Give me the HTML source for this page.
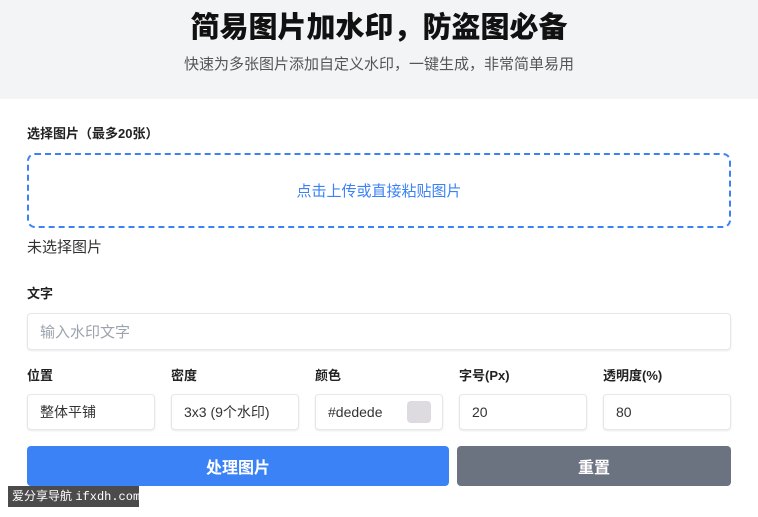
<!DOCTYPE html>
<html><head><meta charset="utf-8"><style>
*{margin:0;padding:0;box-sizing:border-box}
body{width:758px;height:517px;background:#fff;font-family:"Liberation Sans","Noto Sans CJK SC",sans-serif;position:relative;overflow:hidden;color:#222}
.a{position:absolute}
.hd{left:0;top:0;width:758px;height:99px;background:#f3f4f6}
.lbl{font-size:13px;font-weight:bold;color:#222}
.inp{border:1px solid #e5e7eb;border-radius:4px;box-shadow:0 1px 2px rgba(0,0,0,.08);background:#fff;font-size:14px;color:#333;padding-left:12px;display:flex;align-items:center}
.btn{border-radius:4px;color:#fff;font-size:16px;font-weight:bold;display:flex;align-items:center;justify-content:center}
</style></head><body>
<div class="a hd"></div>
<div class="a" style="left:0;width:758px;top:8px;text-align:center;font-size:29px;font-weight:900;color:#111;line-height:40px">简易图片加水印，防盗图必备</div>
<div class="a" style="left:0;width:758px;top:55px;text-align:center;font-size:15px;color:#555;line-height:20px">快速为多张图片添加自定义水印，一键生成，非常简单易用</div>
<div class="a lbl" style="left:27px;top:125px;line-height:18px">选择图片（最多20张）</div>
<div class="a" style="left:27px;top:153px;width:704px;height:75px;border:2px dashed #3b82f6;border-radius:8px;display:flex;align-items:center;justify-content:center;color:#3b82f6;font-size:15px">点击上传或直接粘贴图片</div>
<div class="a" style="left:27px;top:238px;font-size:15px;color:#333;line-height:20px">未选择图片</div>
<div class="a lbl" style="left:27px;top:285px;line-height:18px">文字</div>
<div class="a inp" style="left:27px;top:313px;width:704px;height:37px;color:#9ca3af;font-size:15px">输入水印文字</div>
<div class="a lbl" style="left:27px;top:367px;line-height:18px">位置</div>
<div class="a lbl" style="left:171px;top:367px;line-height:18px">密度</div>
<div class="a lbl" style="left:315px;top:367px;line-height:18px">颜色</div>
<div class="a lbl" style="left:459px;top:367px;line-height:18px">字号(Px)</div>
<div class="a lbl" style="left:603px;top:367px;line-height:18px">透明度(%)</div>
<div class="a inp" style="left:27px;top:394px;width:128px;height:36px">整体平铺</div>
<div class="a inp" style="left:171px;top:394px;width:128px;height:36px">3x3 (9个水印)</div>
<div class="a inp" style="left:315px;top:394px;width:128px;height:36px">#dedede<div class="a" style="left:91px;top:6px;width:24px;height:22px;background:#dedbe0;border-radius:4px"></div></div>
<div class="a inp" style="left:459px;top:394px;width:128px;height:36px">20</div>
<div class="a inp" style="left:603px;top:394px;width:128px;height:36px">80</div>
<div class="a btn" style="left:27px;top:446px;width:422px;height:40px;background:#3b82f6">处理图片</div>
<div class="a btn" style="left:457px;top:446px;width:274px;height:40px;background:#6b7280">重置</div>
<div class="a" style="left:8px;top:486px;width:131px;height:21px;background:#4b4b4b;color:#fff;font-size:12px;line-height:21px;padding-left:4px;white-space:nowrap">爱分享导航 <span style="font-family:'Liberation Mono',monospace">ifxdh.com</span></div>
</body></html>
